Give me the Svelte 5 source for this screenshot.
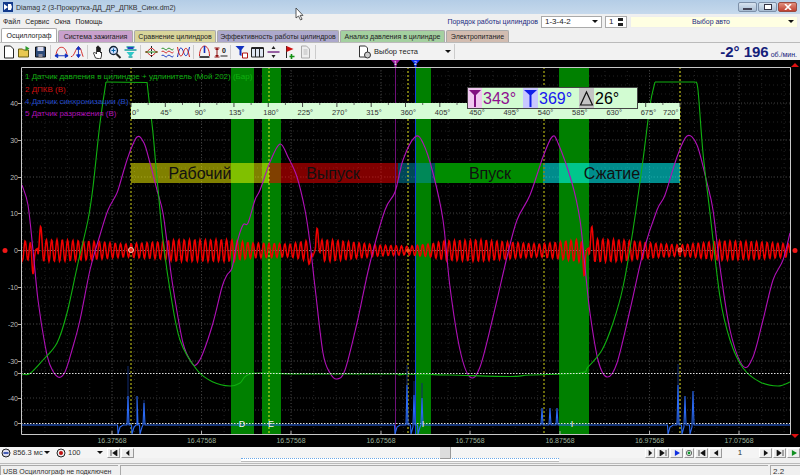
<script>
  const mag = [[22,185],[28,205],[33,250],[38,300],[45,345],[50,365],[58,377],[65,372],[72,350],[80,320],[90,270],[100,235],[108,210],[116,195],[119,187],[128,157],[137,137],[144,143],[150,163],[157,190],[163,213],[168,250],[173,287],[183,343],[192,363],[197,364],[203,353],[213,323],[222,287],[227,275],[232,268],[237,243],[243,225],[248,223],[255,200],[260,190],[270,162],[280,144],[288,157],[297,177],[305,210],[310,243],[315,287],[323,353],[330,373],[337,379],[345,370],[357,323],[370,263],[385,210],[395,192],[403,160],[415,137],[423,143],[433,173],[443,220],[450,287],[460,350],[470,377],[480,367],[493,317],[507,257],[517,220],[530,195],[543,157],[552,137],[558,143],[572,183],[580,220],[585,267],[590,313],[598,360],[607,377],[617,363],[630,310],[643,253],[657,210],[665,195],[677,157],[687,136],[697,145],[707,183],[713,210],[720,267],[730,330],[743,366],[753,357],[763,320],[773,280],[783,260],[790,233]];
  const grnA = [[22,374],[30,373.5],[43,360],[57,343],[67,313],[78,263],[88,220],[93,187],[100,123],[106,82]];
  const grnB = [[147,82],[149,100],[153,133],[157,178],[163,240],[170,290],[180,340],[197,370],[213,382],[230,386],[240,383],[252,373.5],[300,374],[395,374],[399,375],[403,374],[450,375],[510,376.5],[530,375],[580,373],[588,367],[602,350],[613,323],[623,287],[633,230],[643,160],[650,105],[655,82]];
  const grnC = [[695,82],[698,90],[703,153],[710,213],[720,297],[730,340],[743,368],[760,382],[778,386],[790,382]];
  const amp = [[22,9],[33,9],[42,10],[60,10],[100,8],[125,6],[160,8],[175,10],[230,10],[250,7],[290,6],[305,9],[330,10],[350,8],[380,5],[408,4],[430,6],[445,9],[480,10],[520,7],[540,6],[560,8],[585,11],[620,10],[650,7],[680,5],[720,9],[760,8],[790,6]];

  function smooth(p) {
    let d = `M${p[0][0]} ${p[0][1]}`;
    for (let i = 0; i < p.length - 1; i++) {
      const a = p[Math.max(i - 1, 0)], b = p[i], c = p[i + 1], e = p[Math.min(i + 2, p.length - 1)];
      const c1 = [b[0] + (c[0] - a[0]) / 6, b[1] + (c[1] - a[1]) / 6];
      const c2 = [c[0] - (e[0] - b[0]) / 6, c[1] - (e[1] - b[1]) / 6];
      d += `C${c1[0].toFixed(1)} ${c1[1].toFixed(1)} ${c2[0].toFixed(1)} ${c2[1].toFixed(1)} ${c[0]} ${c[1]}`;
    }
    return d;
  }
  const ampAt = (x) => {
    for (let i = 0; i < amp.length - 1; i++) {
      if (x <= amp[i + 1][0]) {
        const t = (x - amp[i][0]) / (amp[i + 1][0] - amp[i][0]);
        return amp[i][1] + (amp[i + 1][1] - amp[i][1]) * t;
      }
    }
    return 6;
  };
  const bump = (x, c, h, w = 1.3) => h * Math.exp(-((x - c) * (x - c)) / (2 * w * w));
  let redPts = [];
  for (let x = 22; x <= 790; x += 0.5) {
    let a = ampAt(x) * 1.08;
    for (const c of [36, 314, 587]) if (Math.abs(x - c) < 2) a = 2;
    let y = 250 + a * Math.sin((2 * Math.PI * x) / 5.3) + 0.5;
    for (const c of [40, 318, 591]) y -= bump(x, c, 17);
    for (const c of [33, 311, 584]) y += bump(x, c, 14);
    redPts.push(x + ',' + y.toFixed(1));
  }
  const red = redPts.join(' ');

  const spikes = [[128,396],[137,396],[144,403],[407,385],[414,395],[422,398],[542,408],[550,408],[557,408],[678,385],[685,396],[693,391]];
  const dark = [[128,366],[144,400],[407,365],[414,381],[422,383],[678,364]];
  const dips = [118,132,140,395,411,418,668,682,690];
  let blue = [[22,425]];
  const ev = [...spikes.map(s => ['s', s[0], s[1]]), ...dips.map(d => ['d', d, 434])].sort((a, b) => a[1] - b[1]);
  for (const e of ev) {
    if (e[0] === 's') blue.push([e[1] - 1, 425], [e[1], e[2]], [e[1] + 1, 425]);
    else blue.push([e[1] - 0.5, 425], [e[1], e[2]], [e[1] + 2, 427], [e[1] + 5, 425]);
  }
  blue.push([790, 425]);
  blue = blue.sort((a, b) => a[0] - b[0]);
  const bluePts = blue.map(p => p.join(',')).join(' ');

  const vMajor = [112, 201.5, 291, 381, 470, 560, 649.5, 739];
  const times = ['16.37568','16.47568','16.57568','16.67568','16.77568','16.87568','16.97568','17.07568'];
  let vMinor = [];
  for (let x = 22.5; x < 790; x += 22.4) vMinor.push(x);
  let hMinor = [];
  for (let y = 76; y < 372; y += 9.2) hMinor.push(Math.round(y));
  const hMajor = [103, 140, 177, 213, 287, 324, 361, 398, 410];
  const yLabels = [[103,'40'],[140,'30'],[177,'20'],[213,'10'],[250,'0'],[287,'-10'],[324,'-20'],[361,'-30'],[373,'0'],[398,'-40'],[423,'0']];
  const angles = Array.from({ length: 17 }, (_, i) => i * 45);
  const angX = (a) => 131 + (a * 549) / 720;
  const angOff = (a) => (a === 0 ? 1 : a === 720 ? -17 : -5);

  const tabs = [
    ['Осциллограф', 'active'], ['Система зажигания', 't1'], ['Сравнение цилиндров', 't2'],
    ['Эффективность работы цилиндров', 't3'], ['Анализ давления в цилиндре', 't4'], ['Электропитание', 't5']
  ];
</script>

<div class="win">
  <header class="title">
    <svg class="appicon" viewBox="0 0 10 10"><rect width="10" height="10" fill="#123a8c"/><path d="M1 2l4 3-4 3zM5 2h3l1 3-1 3H5z" fill="#fff"/></svg>
    <span class="ttext">Diamag 2 (3-Прокрутка-ДД_ДР_ДПКВ_Синх.dm2)</span>
    <svg class="cursor" viewBox="0 0 10 13"><path d="M1 0v10l2.500-2 2 4 1.600-.8-2-3.800H8z" fill="#fff" stroke="#333" stroke-width=".8"/></svg>
    <div class="wbtns">
      <span class="wb"><i class="minb"></i></span>
      <span class="wb"><i class="maxb"></i></span>
      <span class="wb close"><svg viewBox="0 0 8 6" width="8" height="6"><path d="M1 0l6 6M7 0L1 6" stroke="#fff" stroke-width="1.600"/></svg></span>
    </div>
  </header>

  <div class="menu">
    <nav class="mitems"><span>Файл</span><span>Сервис</span><span>Окна</span><span>Помощь</span></nav>
    <span class="order">Порядок работы цилиндров</span>
    <div class="combo c1"><span>1-3-4-2</span><i class="arr"></i></div>
    <div class="combo c2"><span>1</span><b class="spin"></b></div>
    <div class="combo c3"><span class="ctr">Выбор авто</span><i class="arr"></i></div>
  </div>

  <div class="tabs">
    {#each tabs as t}
      <div class="tab {t[1]}">{t[0]}</div>
    {/each}
  </div>

  <div class="toolbar">
    <div class="tg">
      <svg class="ic" viewBox="0 0 14 14"><path d="M3 1h6l3 3v9H3z" fill="#fff" stroke="#222"/></svg>
      <svg class="ic" viewBox="0 0 14 14"><path d="M1 4h4l1 1h5v7H1z" fill="#e8c850" stroke="#665c10"/><path d="M8 1l4 2.500-4 2.500z" fill="#2a9a2a"/></svg>
      <svg class="ic" viewBox="0 0 14 14"><path d="M2 2h10v10H2z" fill="#2c4a78" stroke="#111"/><path d="M4 2h6v4H4z" fill="#dde"/><path d="M5 9h4v3H5z" fill="#889"/></svg>
    </div>
    <div class="tg g2">
      <svg class="ic" viewBox="0 0 16 14"><path d="M2 11C3 3 6 2 8 2s5 1 6 9" fill="none" stroke="#d02020"/><path d="M1 11h14M1 11l3-2v4zM15 11l-3-2v4z" stroke="#1030c0" fill="#1030c0"/></svg>
      <svg class="ic" viewBox="0 0 16 14"><path d="M1 12C5 12 6 2 9 2c3 0 3 5 5 10" fill="none" stroke="#d02020"/><path d="M9 2v10M9 1l-2 3h4zM9 13l-2-3h4z" stroke="#1030c0" fill="#1030c0"/></svg>
    </div>
    <div class="tg g3">
      <svg class="ic" viewBox="0 0 14 14"><path d="M4 13L2 8l1-1 2 2V2h1v5-6h1v6-5h1v5-4h1v5l1-1v4l-1 3z" fill="#fff" stroke="#111" stroke-width=".8"/></svg>
      <svg class="ic" viewBox="0 0 14 14"><circle cx="6" cy="5.500" r="4" fill="#cdf" stroke="#123" stroke-width="1.300"/><path d="M9 9l4 4" stroke="#222" stroke-width="2"/><path d="M4 5.500h4M6 3.500v4" stroke="#06a"/></svg>
      <svg class="ic" viewBox="0 0 14 14"><path d="M1 5h12M3 2h8M5 12h4" stroke="#18a0a0" stroke-width="1.500"/><path d="M3 7l4 5 4-5z" fill="#30c8c8"/><path d="M4 3h6" stroke="#2040c0" stroke-width="2"/></svg>
    </div>
    <div class="tg g4">
      <svg class="ic" viewBox="0 0 14 14"><path d="M1 7c3 0 4-4 6-4s3 4 6 4M1 7c3 0 4 4 6 4s3-4 6-4" fill="none" stroke="#d02020"/><path d="M7 1v12" stroke="#222" stroke-dasharray="2 1"/><path d="M1 7h12" stroke="#1a8a1a"/></svg>
      <svg class="ic" viewBox="0 0 14 14"><path d="M1 4c2-3 4 3 6 0s4 3 6 0" fill="none" stroke="#1a8a1a"/><path d="M1 7c2-3 4 3 6 0s4 3 6 0" fill="none" stroke="#d02020"/><path d="M1 11c2-3 4 3 6 0s4 3 6 0" fill="none" stroke="#1030c0"/></svg>
      <svg class="ic" viewBox="0 0 14 14"><path d="M1 12C3 1 5 1 7 7s4 5 6-5" fill="none" stroke="#1030c0"/><path d="M1 2c2 11 4 11 6 5s4-5 6 5" fill="none" stroke="#d02020"/></svg>
    </div>
    <div class="tg g5">
      <svg class="ic" viewBox="0 0 14 14"><path d="M2 11C2 4 5 1 7 1s5 3 5 10" fill="none" stroke="#d02020"/><path d="M7 1v7" stroke="#1030c0" stroke-width="1.600"/><path d="M2 11h10v2H2z" fill="#444"/></svg>
      <svg class="ic" viewBox="0 0 14 14"><path d="M1 3h5M1 12h5M3.500 3v9" stroke="#901010"/><path d="M1.500 5l2-2 2 2zM1.500 10l2 2 2-2z" fill="#901010"/><path d="M7 11h7" stroke="#222"/><text x="8.500" y="8" class="zr">0</text></svg>
    </div>
    <div class="tg g6">
      <svg class="ic" viewBox="0 0 14 14"><path d="M1 1h9L7 5v6L5 10V5z" fill="#1030c0"/><path d="M8 8h5v5H8z" fill="#fff" stroke="#b01010"/></svg>
      <svg class="ic" viewBox="0 0 14 14"><path d="M1 3h12v9H1zM5 3v9M9 3v9" fill="#dfe6f2" stroke="#222"/><path d="M1 3h12" stroke="#222" stroke-width="2"/></svg>
      <svg class="ic" viewBox="0 0 14 14"><path d="M1 7h12" stroke="#702080" stroke-width="1.400"/><path d="M7 1l-2 3h4zM7 13l-2-3h4z" fill="#222"/></svg>
      <svg class="ic" viewBox="0 0 14 14"><path d="M4 1v12" stroke="#222"/><path d="M4 1l7 3-7 3z" fill="#d01010"/><path d="M9 9v5M7 11.500h5" stroke="#109010" stroke-width="1.600"/></svg>
      <svg class="ic" viewBox="0 0 14 14"><path d="M3 1h5l3 3v9H3z" fill="#eee" stroke="#aaa"/><path d="M5 5h4M5 7h4M5 9h4" stroke="#bbb"/></svg>
    </div>
    <div class="test">
      <svg class="ic big" viewBox="0 0 14 14"><path d="M2 1h6l2 2v9H2z" fill="#fff" stroke="#333"/><circle cx="10" cy="10" r="3" fill="#ccc" stroke="#333"/></svg>
      <span>Выбор теста</span>
      <i class="arr"></i>
    </div>
    <div class="rpm"><b>-2° 196</b><small>об./мин.</small></div>
  </div>

  <svg class="plot" viewBox="0 60 800 387" width="800" height="387">
    <rect x="0" y="60" width="800" height="387" fill="#000"/>
    {#each vMinor as x}<line x1={x} x2={x} y1="67" y2="434" class="gmin"/>{/each}
    {#each hMinor as y}<line x1="21" x2="790" y1={y} y2={y} class="gmin"/>{/each}
    {#each vMajor as x}<line x1={x} x2={x} y1="67" y2="434" class="gmaj"/>{/each}
    {#each hMajor as y}<line x1="21" x2="790" y1={y} y2={y} class="gmaj"/>{/each}

    <rect x="231" y="67" width="23" height="367" class="gband"/>
    <rect x="262" y="67" width="19" height="367" class="gband"/>
    <rect x="415" y="67" width="16" height="367" class="gband"/>
    <rect x="559" y="67" width="30" height="367" class="gband"/>

    <rect x="131" y="163" width="138" height="20" fill="#ffff00" opacity=".5"/>
    <rect x="269" y="163" width="129" height="20" fill="#ff0000" opacity=".5"/>
    <rect x="398" y="163" width="37" height="20" fill="#0090b0" opacity=".5"/>
    <rect x="435" y="163" width="108" height="20" fill="#008c00"/>
    <rect x="543" y="163" width="137" height="20" fill="#00ffff" opacity=".55"/>

    <line x1="131" x2="131" y1="67" y2="434" class="ydim"/>
    <line x1="544" x2="544" y1="67" y2="434" class="ydim"/>
    <line x1="269" x2="269" y1="67" y2="434" class="ybr"/>
    <line x1="408" x2="408" y1="67" y2="434" class="ybr"/>
    <line x1="680" x2="680" y1="67" y2="434" class="ybr"/>
    <line x1="395.500" x2="395.500" y1="60" y2="434" stroke="#70107a"/>
    <line x1="415.500" x2="415.500" y1="60" y2="434" stroke="#1040e0"/>

    <line x1="21" x2="790" y1="250.500" y2="250.500" class="wdot gray"/>
    <polyline points={red} fill="none" stroke="#f00000" stroke-width="1.500"/>
    <path d={smooth(mag)} fill="none" stroke="#b010b8" stroke-width="1.100"/>
    <path d={smooth(grnA)} fill="none" stroke="#10b010" stroke-width="1.100"/>
    <path d="M106 82L147 82.500M655 82L695 82" fill="none" stroke="#10b010" stroke-width="1.100"/>
    <path d={smooth(grnB)} fill="none" stroke="#10b010" stroke-width="1.100"/>
    <path d={smooth(grnC)} fill="none" stroke="#10b010" stroke-width="1.100"/>

    <line x1="21" x2="790" y1="373.500" y2="373.500" class="wdot"/>
    <line x1="21" x2="790" y1="423.500" y2="423.500" class="wdot"/>
    {#each dark as d}<line x1={d[0]} x2={d[0]} y1={d[1]} y2="425" stroke="#102a70"/>{/each}
    <polyline points={bluePts} fill="none" stroke="#2a68f0" stroke-width="1.100"/>

    <path d="M21.500 67.500H790.500V434.500H21.500Z" fill="none" stroke="#c8c8c8"/>
    {#each yLabels as l}
      <text x="18" y={l[0] + 3} class="yl">{l[1]}</text>
      <line x1="18" x2="21" y1={l[0] + 0.5} y2={l[0] + 0.5} stroke="#aaa"/>
    {/each}
    {#each vMajor as x, i}
      <line x1={x} x2={x} y1="431" y2="434" stroke="#aaa"/>
      <text x={x} y="443" class="xl">{times[i]}</text>
    {/each}

    <text x="25" y="79" class="leg" fill="#10b010">1 Датчик давления в цилиндре + удлинитель (Мой 202) (Бар)</text>
    <text x="25" y="91.500" class="leg" fill="#d01010">2 ДПКВ (В)</text>
    <text x="25" y="103.500" class="leg" fill="#2048c8">4 Датчик синхронизации (В)</text>
    <text x="25" y="116" class="leg" fill="#b010b8">5 Датчик разряжения (В)</text>

    <rect x="131" y="103" width="549" height="16" fill="#d6fcd6"/>
    {#each angles as a}
      <line x1={angX(a)} x2={angX(a)} y1="103" y2="107" stroke="#444"/>
      <line x1={angX(a) + 17.200} x2={angX(a) + 17.200} y1="103" y2="105" stroke="#666" opacity={a < 720 ? 1 : 0}/>
      <text x={angX(a) + angOff(a)} y="115" class="ang">{a}°</text>
    {/each}

    <text x="200" y="179" class="ph">Рабочий</text>
    <text x="333" y="179" class="ph">Выпуск</text>
    <text x="490" y="179" class="ph">Впуск</text>
    <text x="612" y="179" class="ph">Сжатие</text>

    <rect x="467.500" y="87.500" width="170" height="21" fill="#d2fcd2" stroke="#444"/>
    <rect x="468" y="88" width="14" height="20" fill="#f0c8f0"/>
    <path d="M469 90h12l-5 5v12h-2V95z" fill="#801080"/>
    <text x="483" y="104" class="val" fill="#901090">343°</text>
    <rect x="523" y="88" width="15" height="20" fill="#c8c8ff"/>
    <path d="M524 90h13l-5.500 5v12h-2V95z" fill="#1020e8"/>
    <text x="539" y="104" class="val" fill="#1818f0">369°</text>
    <rect x="579" y="88" width="15" height="20" fill="#c4c4c4"/>
    <path d="M586.500 92l6 13h-12z" fill="none" stroke="#111" stroke-width="1.200"/>
    <text x="595" y="104" class="val" fill="#000">26°</text>

    <text x="242" y="427" class="mk">D</text>
    <text x="271" y="427" class="mk">E</text>
    <text x="423" y="427" class="mk">I</text>
    <text x="572" y="427" class="mk">I</text>

    <path d="M391 60h9l-3.500 4v3h-2v-3z" fill="#a020a0"/>
    <text x="395.500" y="65" class="mnum">1</text>
    <path d="M411 60h9l-3.500 4v3h-2v-3z" fill="#1030f0"/>
    <text x="415.500" y="65" class="mnum">2</text>
    <path d="M791 67h8l-4-4z" fill="#e01010"/>
    <path d="M791 434h8l-4 4z" fill="#e01010"/>
    <circle cx="5" cy="250.500" r="2.500" fill="#f01818"/>
    <circle cx="795" cy="250.500" r="2.500" fill="#f01818"/>
    <circle cx="131" cy="250" r="2.500" fill="#f03020" stroke="#f8c8b0"/>
    <circle cx="408" cy="250.500" r="2" fill="#f05020"/>
    <circle cx="680" cy="250" r="2" fill="#f03020" stroke="#f8b0a0" stroke-width=".6"/>
  </svg>

  <div class="ctrl">
    <svg class="rnd" viewBox="0 0 10 10"><circle cx="5" cy="5" r="4" fill="#dde" stroke="#222"/><path d="M2.500 5h5" stroke="#1030a0" stroke-width="1.500"/></svg>
    <span class="cv w1">856.3 мс</span><i class="arr"></i>
    <svg class="rnd m" viewBox="0 0 10 10"><circle cx="5" cy="5" r="4" fill="#eee" stroke="#222"/><circle cx="5" cy="5" r="2" fill="#c01010"/></svg>
    <span class="cv w2">100</span><i class="arr"></i>
    <div class="tbtn first"><svg viewBox="0 0 9 7"><path d="M1 0v7M8 0v7L3 3.500z" stroke="#111" fill="#111" stroke-width=".8"/></svg></div>
    <div class="tbtn"><svg viewBox="0 0 9 7"><path d="M6 0v7L2 3.500z" fill="#111"/></svg></div>
    <div class="track"><span class="thumb"></span></div>
    <div class="tbtn n"><svg viewBox="0 0 9 7"><path d="M3 0v7l4-3.500z" fill="#111"/></svg></div>
    <div class="tbtn"><svg viewBox="0 0 9 7"><path d="M8 0v7M1 0v7l5-3.500z" stroke="#111" fill="#111" stroke-width=".8"/></svg></div>
    <div class="tbtn"><svg viewBox="0 0 9 7"><path d="M2 0v7l6-3.500z" fill="#1030e0"/></svg></div>
    <div class="tbtn n"><svg viewBox="0 0 9 9"><circle cx="4.500" cy="4.500" r="4" fill="#fff" stroke="#222"/><circle cx="4.500" cy="4.500" r="2.200" fill="#109a30"/></svg></div>
    <div class="tbtn"><svg viewBox="0 0 9 7"><path d="M1 0v7M8 0v7L3 3.500z" stroke="#111" fill="#111" stroke-width=".8"/></svg></div>
    <div class="tbtn"><svg viewBox="0 0 9 7"><path d="M7 0v7L2 3.500z" fill="#111"/></svg></div>
    <span class="pg">1</span>
    <div class="tbtn"><svg viewBox="0 0 9 7"><path d="M2 0v7l5-3.500z" fill="#111"/></svg></div>
    <div class="tbtn"><svg viewBox="0 0 9 7"><path d="M8 0v7M1 0v7l5-3.500z" stroke="#111" fill="#111" stroke-width=".8"/></svg></div>
    <div class="tbtn"><svg viewBox="0 0 9 7"><path d="M2 0v7l6-3.500z" fill="#109020"/></svg></div>
  </div>

  <div class="strip"><div class="dots"></div></div>

  <footer class="status">
    <div class="cell s1">USB Осциллограф не подключен</div>
    <div class="cell s2"></div>
    <div class="cell s3">2.2</div>
  </footer>
</div>

<style>
  :global(body) { margin: 0; background: #f0f0f0; }
  .win { width: 800px; height: 475px; overflow: hidden; display: flex; flex-direction: column; font: 7px "Liberation Sans", sans-serif; color: #222; background: #f0f0f0; white-space: nowrap; }
  .title { height: 14px; display: flex; align-items: center; background: linear-gradient(#b4cde6, #c6d9ec); position: relative; }
  .appicon { width: 10px; height: 10px; margin-left: 3px; }
  .ttext { margin-left: 3px; font-size: 7px; color: #333; }
  .cursor { position: absolute; left: 295px; top: 8px; width: 10px; height: 13px; }
  .wbtns { margin-left: auto; margin-right: 3px; display: flex; gap: 1px; align-self: flex-start; }
  .wb { width: 19px; height: 10px; margin-top: 2px; border: 1px solid #7d90a8; box-sizing: border-box; border-radius: 2px; background: linear-gradient(#d8e4f0, #a8bcd2); display: flex; align-items: center; justify-content: center; }
  .wb.close { background: linear-gradient(#e09080, #c04030); border-color: #9a4a40; }
  .minb { width: 7px; border: 1px solid #445; background: #fff; height: 0; margin-top: 3px; }
  .maxb { width: 6px; height: 4px; border: 1px solid #334; background: #fff; }
  .menu { height: 15px; display: flex; align-items: center; }
  .mitems { display: flex; gap: 5px; margin-left: 3px; font-size: 7px; }
  .order { margin-left: auto; color: #1a2a80; font-size: 7px; }
  .combo { height: 12px; box-sizing: border-box; border: 1px solid #aaa; background: #fff; display: flex; align-items: center; font-size: 8px; padding: 0 3px; margin-left: 3px; }
  .c1 { width: 61px; justify-content: space-between; }
  .c2 { width: 22px; justify-content: space-between; }
  .c3 { width: 168px; margin-right: 2px; background: #ffffe2; border-color: #eee; color: #1a2a80; justify-content: space-between; }
  .ctr { flex: 1; text-align: center; font-size: 7px; }
  .spin { width: 5px; height: 8px; background: linear-gradient(#222 0 35%, transparent 35% 65%, #222 65%); }
  .arr { display: inline-block; width: 0; height: 0; border: 3px solid transparent; border-top-color: #111; border-bottom: 0; flex: none; }
  .tabs { height: 14px; display: flex; gap: 1px; padding-left: 1px; align-items: flex-end; border-bottom: 1px solid #bbb; box-sizing: border-box; }
  .tab { height: 12px; display: flex; align-items: center; justify-content: center; font-size: 7px; box-sizing: border-box; border: 1px solid #aaa; border-bottom: 0; border-radius: 2px 2px 0 0; color: #222; }
  .tab.active { width: 56px; height: 14px; background: #fff; }
  .t1 { width: 75px; background: #c8a0cc; }
  .t2 { width: 82px; background: #d8d49a; }
  .t3 { width: 122px; background: #aca8cc; }
  .t4 { width: 105px; background: #a4d0a0; }
  .t5 { width: 63px; background: #d2bcb0; }
  .toolbar { height: 17px; display: flex; align-items: center; background: #f2f2f2; padding-left: 1px; }
  .tg { display: flex; gap: 1px; border-right: 1px solid #ccc; padding-right: 2px; }
  .g2, .g3, .g4, .g5, .g6 { margin-left: 3px; }
  .ic { width: 15px; height: 14px; flex: none; }
  .zr { font: bold 7px "Liberation Sans", sans-serif; fill: #111; }
  .test { margin-left: 41px; width: 98px; height: 15px; display: flex; align-items: center; gap: 2px; border-right: 1px solid #ccc; padding-right: 3px; box-sizing: border-box; font-size: 7.5px; }
  .test .arr { margin-left: auto; }
  .rpm { margin-left: auto; padding-right: 3px; color: #14207a; display: flex; align-items: baseline; gap: 2px; }
  .rpm b { font-size: 15px; }
  .rpm small { font-size: 7px; }
  .plot { display: block; flex: none; }
  .gmin { stroke: #222; stroke-dasharray: 1 3; }
  .gmaj { stroke: #3c3c3c; stroke-dasharray: 1 2; }
  .gband { fill: #008000; }
  .ydim { stroke: #8c8c10; stroke-width: 1.500; stroke-dasharray: 2 2; }
  .ybr { stroke: #e8e820; stroke-dasharray: 2 2; }
  .wdot { stroke: #e0e0e0; stroke-dasharray: 1.500 1.500; }
  .gray { stroke: #777; }
  text { font-family: "Liberation Sans", sans-serif; }
  .yl { font-size: 7px; fill: #bbb; text-anchor: end; }
  .xl { font-size: 7px; fill: #9bb09b; text-anchor: middle; }
  .leg { font-size: 8px; }
  .ang { font-size: 7.500px; fill: #333; }
  .ph { font-size: 16px; text-anchor: middle; fill: #111; }
  .val { font-size: 16px; }
  .mk { font-size: 9px; fill: #f0f0f0; text-anchor: middle; }
  .mnum { font-size: 5px; fill: #fff; text-anchor: middle; }
  .ctrl { height: 11px; display: flex; align-items: center; background: #f4f4f4; }
  .rnd { width: 10px; height: 10px; margin-left: 1px; flex: none; }
  .rnd.m { margin-left: 6px; }
  .cv { font-size: 7.5px; color: #333; padding-left: 2px; }
  .w1 { width: 31px; }
  .w2 { width: 29px; }
  .tbtn { width: 13px; height: 10px; box-sizing: border-box; border: 1px solid #fff; border-right-color: #999; border-bottom-color: #999; background: #eee; display: flex; align-items: center; justify-content: center; margin-left: 1px; flex: none; }
  .tbtn svg { width: 8px; height: 6px; }
  .tbtn.first { margin-left: 4px; }
  .tbtn.n { width: 10px; }
  .track { flex: 1; height: 100%; position: relative; }
  .thumb { position: absolute; left: 306px; top: 0; width: 10px; height: 11px; background: #ddd; border-right: 1px solid #999; border-bottom: 1px solid #999; }
  .pg { width: 36px; text-align: center; font-size: 8px; color: #333; flex: none; }
  .strip { height: 5px; background: #f0f0f0; border-bottom: 1px solid #bbb; }
  .dots { margin-left: 241px; width: 318px; height: 4px; box-sizing: border-box; background: #fff; border-bottom: 1px solid #bbb; border-top: 1px dotted #6aa8e8; }
  .status { flex: 1; display: flex; gap: 2px; min-height: 0; background: #f0f0f0; padding-top: 1px; }
  .cell { border-left: 1px solid #aaa; border-top: 1px solid #aaa; box-sizing: border-box; height: 11px; display: flex; align-items: center; font-size: 7px; padding-left: 2px; color: #333; }
  .s1 { width: 118px; }
  .s2 { flex: 1; }
  .s3 { width: 30px; font-size: 8px; }
</style>
